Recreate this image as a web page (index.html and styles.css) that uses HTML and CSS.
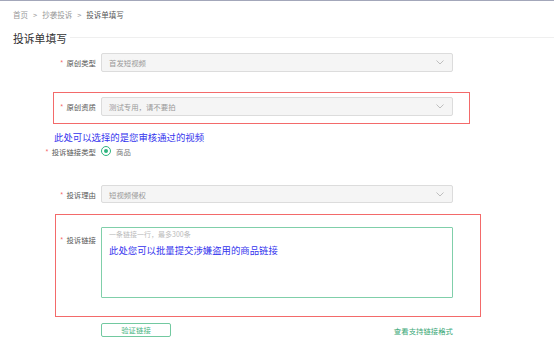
FILE: index.html
```html
<!DOCTYPE html>
<html lang="zh-CN">
<head>
  <meta charset="UTF-8">
  <meta name="viewport" content="width=device-width, initial-scale=1.0">
  <title>投诉单填写</title>

  <link rel="stylesheet" href="styles.css">
</head>

<body>

<div class="page">
  <div class="crumbs">
    <span>首页</span><span class="sep">&gt;</span><span>抄袭投诉</span><span class="sep">&gt;</span><span class="current">投诉单填写</span>
  </div>

  <div class="title">
    <h1>投诉单填写</h1>
    <span class="rule"></span>
  </div>

  <form class="form">
    <div class="row row-type">
      <label class="label">原创类型</label>
      <div class="select">
        <span>首发短视频</span>
        <svg class="arrow" width="8" height="5" viewBox="0 0 8 5"><path d="M0.5 0.5 L4 4 L7.5 0.5" fill="none" stroke="#b8b8b8" stroke-width="0.9"/></svg>
      </div>
    </div>

    <div class="row row-source mark mark-source">
      <label class="label">原创资质</label>
      <div class="select">
        <span>测试专用，请不要拍</span>
        <svg class="arrow" width="8" height="5" viewBox="0 0 8 5"><path d="M0.5 0.5 L4 4 L7.5 0.5" fill="none" stroke="#b8b8b8" stroke-width="0.9"/></svg>
      </div>
    </div>

    <p class="note note-source">此处可以选择的是您审核通过的视频</p>

    <div class="row row-radio">
      <label class="label">投诉链接类型</label>
      <div class="radio-group">
        <span class="radio"><span class="dot"></span></span>
        <span class="radio-text">商品</span>
      </div>
    </div>

    <div class="row row-reason">
      <label class="label">投诉理由</label>
      <div class="select">
        <span>短视频侵权</span>
        <svg class="arrow" width="8" height="5" viewBox="0 0 8 5"><path d="M0.5 0.5 L4 4 L7.5 0.5" fill="none" stroke="#b8b8b8" stroke-width="0.9"/></svg>
      </div>
    </div>

    <div class="row row-links mark mark-links">
      <label class="label label-top">投诉链接</label>
      <div class="textarea">
        <div class="placeholder">一条链接一行，最多300条</div>
        <div class="note note-links">此处您可以批量提交涉嫌盗用的商品链接</div>
      </div>
    </div>

    <div class="row row-actions">
      <span class="label"></span>
      <div class="actions">
        <button type="button" class="check-button">验证链接</button>
        <a class="format-link">查看支持链接格式</a>
      </div>
    </div>
  </form>
</div>

</body>
</html>
```

FILE: styles.css
```css
body {
  margin: 0;
  font-family: "Noto Sans CJK SC", "Noto Sans", sans-serif;
  background-color: #fff;
}

.page {
  border-top: 1px solid #a3a7ba;
  height: 342px;
  overflow: hidden;
}

.crumbs {
  height: 27px;
  line-height: 27px;
  padding-left: 13px;
  font-size: 7.5px;
  color: #999;
}

.crumbs .sep {
  margin: 0 5px;
}

.crumbs .current {
  color: #555;
}

.title {
  display: flex;
  align-items: center;
  height: 20px;
  padding-left: 13px;
}

.title h1 {
  margin: 0;
  font-size: 10.8px;
  font-weight: normal;
  color: #333;
  line-height: 20px;
}

.title .rule {
  flex: 1;
  height: 1px;
  margin-left: 3px;
  margin-top: -2px;
  background-color: #efefef;
}

.form {
  margin: 0;
  padding-top: 5px;
}

.row {
  display: flex;
  align-items: center;
  gap: 5px;
  width: 453px;
}

.label {
  width: 96px;
  flex-shrink: 0;
  text-align: right;
  font-size: 7.4px;
  color: #555;
}

.label:not(:empty)::before {
  content: "*";
  color: #f56c6c;
  margin-right: 3px;
}

.select {
  flex: 1;
  height: 19px;
  box-sizing: border-box;
  display: flex;
  align-items: center;
  justify-content: space-between;
  padding: 0 8px 0 7px;
  background-color: #f5f5f5;
  border: 1px solid #dcdcdc;
  border-radius: 2px;
  font-size: 7.4px;
  color: #999;
}

.row-source {
  margin-top: 25px;
}

.row-reason {
  margin-top: 28px;
  height: 18px;
}

.row-reason .select {
  height: 18px;
}

.note {
  margin: 0;
  font-size: 9.4px;
  color: #3434ee;
  line-height: 12px;
}

.note-source {
  margin-top: 15px;
  padding-left: 54px;
}

.row-radio {
  margin-top: 2px;
  height: 12px;
}

.radio-group {
  display: flex;
  align-items: center;
}

.radio {
  width: 10px;
  height: 10px;
  box-sizing: border-box;
  border: 1.5px solid #2eb57f;
  border-radius: 50%;
  display: flex;
  align-items: center;
  justify-content: center;
}

.radio .dot {
  width: 4px;
  height: 4px;
  border-radius: 50%;
  background-color: #2eb57f;
}

.radio-text {
  margin-left: 5px;
  font-size: 7.4px;
  color: #777;
}

.row-links {
  margin-top: 24px;
  align-items: flex-start;
}

.label-top {
  margin-top: 7px;
}

.textarea {
  flex: 1;
  height: 71px;
  box-sizing: border-box;
  padding: 1px 7px;
  border: 1.5px solid #80cfaa;
  border-radius: 1px;
}

.placeholder {
  font-size: 7px;
  color: #bbb;
  line-height: 11px;
}

.note-links {
  margin-top: 4px;
}

.row-actions {
  margin-top: 25px;
}

.actions {
  flex: 1;
  display: flex;
  align-items: center;
  justify-content: space-between;
}

.check-button {
  width: 70px;
  height: 14px;
  padding: 0;
  background-color: #fff;
  border: 1.5px solid #72c9a0;
  border-radius: 2px;
  font-family: inherit;
  font-size: 7.4px;
  color: #4cb784;
  line-height: 10px;
}

.format-link {
  font-size: 7.4px;
  color: #3aa877;
}

/* red annotation frames */
.mark {
  position: relative;
}

.mark::after {
  content: "";
  position: absolute;
  box-sizing: border-box;
  border: 1.5px solid #f36a6a;
  pointer-events: none;
}

.mark-source::after {
  left: 53px;
  width: 417px;
  top: -5px;
  bottom: -8px;
}

.mark-links::after {
  left: 55px;
  width: 426px;
  top: -13px;
  bottom: -19px;
}
```
